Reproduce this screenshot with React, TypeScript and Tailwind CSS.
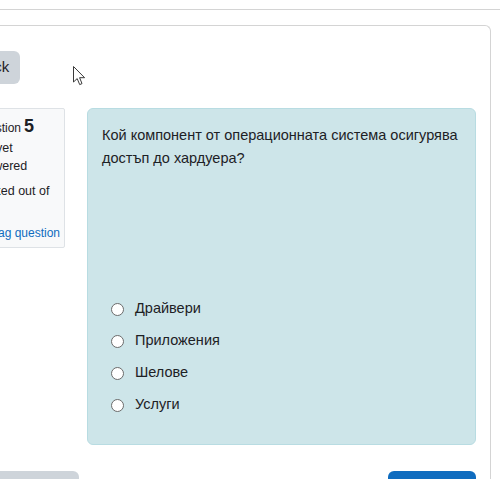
const font = { fontFamily: '"Liberation Sans", Arial, sans-serif' };

const answers = ['Драйвери', 'Приложения', 'Шелове', 'Услуги'];

function Cursor() {
  return (
    <svg
      className="pointer-events-none absolute left-[73px] top-[66px]"
      width="13"
      height="20"
      viewBox="0 0 13 20"
    >
      <polygon
        points="0.5,0.5 0.5,16 4.2,12.6 6.7,18.6 9,17.6 6.6,11.7 11.6,11.7"
        fill="#fff"
        stroke="#3a3a3a"
        strokeWidth="1"
        strokeLinejoin="round"
      />
    </svg>
  );
}

export default function App() {
  return (
    <div
      className="relative h-[479px] w-[500px] overflow-hidden bg-white text-[#1d2125]"
      style={font}
    >
      <div className="h-[10px] border-b border-[#d4d4d4]" />

      <div className="ml-[-62px] mt-[15px] w-[553px] rounded-tr-[6px] border-t border-r border-[#d4d4d4] pb-10 pl-[27px] pr-[14px] pt-[25px]">
        <div className="flex h-[33px] w-[55px] items-center justify-center rounded-[6px] bg-[#ced4da] text-[15px]">
          Back
        </div>

        <div className="mt-[24px] flex items-start gap-[22px]">
          {/* question info: number, state, mark, flag */}
          <div className="flex h-[140px] w-[100px] shrink-0 flex-col whitespace-nowrap rounded-[2px] border border-[#dee2e6] bg-[#f8f9fa] px-[7px] pt-[6px] text-[12px] leading-[18px]">
            <div className="flex items-baseline gap-[3px]">
              <span>Question</span>
              <span className="text-[18px] font-bold leading-[22px]">5</span>
            </div>
            <div className="mt-[2px] whitespace-normal text-[12.5px]">Not yet answered</div>
            <div className="mt-[7px] whitespace-normal text-[12.5px]">Marked out of 1.00</div>
            <div className="mt-[6px] flex items-center gap-[3px] text-[#0f6cbf]">
              <svg width="12" height="12" viewBox="0 0 12 12" className="shrink-0">
                <path d="M2 1v10M2 1.5h7l-1.5 2.5 1.5 2.5H2" fill="none" stroke="#0f6cbf" strokeWidth="1.2" />
              </svg>
              <span>Flag question</span>
            </div>
          </div>

          <div className="flex h-[337px] flex-1 flex-col rounded-[6px] border border-[#b8dce2] bg-[#cde5e9] px-[14px] pb-[23px] pt-[15px]">
            <p className="text-[14.5px] leading-[23px]">
              Кой компонент от операционната система осигурява достъп до хардуера?
            </p>
            <div className="mt-auto flex flex-col">
              {answers.map((a) => (
                <label key={a} className="flex h-[32px] items-center text-[14.5px]">
                  <span className="ml-[9px] mr-[11px] h-[13px] w-[13px] rounded-full border-[1.5px] border-[#6b6b6b] bg-white" />
                  {a}
                </label>
              ))}
            </div>
          </div>
        </div>

        <div className="mt-[26px] flex justify-between">
          <div className="h-[36px] w-[114px] rounded-[6px] bg-[#ced4da]" />
          <div className="h-[36px] w-[88px] rounded-[6px] bg-[#0f6cbf]" />
        </div>
      </div>

      <Cursor />
    </div>
  );
}
